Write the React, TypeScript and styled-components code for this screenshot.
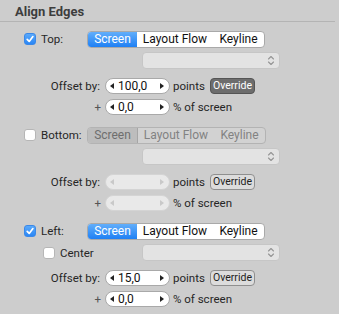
import React from 'react';
import styled, { createGlobalStyle, css } from 'styled-components';

const GlobalStyle = createGlobalStyle`
  html, body {
    margin: 0;
    padding: 0;
    background: #cdcdcd;
  }
  body {
    font-family: Roboto, 'Liberation Sans', Arial, sans-serif;
    font-size: 11.5px;
    color: #262626;
  }
`;

type SectionData = {
  label: string;
  enabled: boolean;
  centerOption?: boolean;
  offset?: string;
  percent?: string;
  overrideOn?: boolean;
};

const sections: SectionData[] = [
  { label: 'Top:', enabled: true, offset: '100,0', percent: '0,0', overrideOn: true },
  { label: 'Bottom:', enabled: false },
  { label: 'Left:', enabled: true, centerOption: true, offset: '15,0', percent: '0,0' },
];

const Check: React.FC<{ on: boolean }> = ({ on }) => (
  <SCheck $on={on}>
    {on && (
      <svg width="10" height="10" viewBox="0 0 10 10">
        <path d="M2.2 5.3 L4.2 7.4 L7.9 2.6" fill="none" stroke="#fff" strokeWidth="1.7" strokeLinecap="round" strokeLinejoin="round" />
      </svg>
    )}
  </SCheck>
);

const Segmented: React.FC<{ disabled?: boolean }> = ({ disabled }) => (
  <SSegmented $disabled={disabled}>
    <SSegment $selected $disabled={disabled} $w={49}>Screen</SSegment>
    <SSegment $disabled={disabled} $w={76}>Layout Flow</SSegment>
    <SSegment $disabled={disabled} $w={51}>Keyline</SSegment>
  </SSegmented>
);

const Popup: React.FC = () => (
  <SPopup>
    <svg width="8" height="11" viewBox="0 0 8 11">
      <path d="M1.5 4 L4 1.5 L6.5 4 M1.5 7 L4 9.5 L6.5 7" fill="none" stroke="#959595" strokeWidth="1.1" strokeLinecap="round" strokeLinejoin="round" />
    </svg>
  </SPopup>
);

const Stepper: React.FC<{ value?: string; disabled: boolean }> = ({ value, disabled }) => (
  <SStepper $disabled={disabled}>
    <SArrow $disabled={disabled}>
      <svg width="4" height="6" viewBox="0 0 4 6"><path d="M4 0 L0 3 L4 6 Z" /></svg>
    </SArrow>
    <SValue>{value}</SValue>
    <SArrow $disabled={disabled}>
      <svg width="4" height="6" viewBox="0 0 4 6"><path d="M0 0 L4 3 L0 6 Z" /></svg>
    </SArrow>
  </SStepper>
);

const Section: React.FC<{ data: SectionData; first?: boolean }> = ({ data, first }) => (
  <SSection $first={first}>
    <SHeaderRow>
      <SLabelCell>
        <Check on={data.enabled} />
        <SCheckLabel>{data.label}</SCheckLabel>
      </SLabelCell>
      <Segmented disabled={!data.enabled} />
    </SHeaderRow>
    <SPopupRow>
      {data.centerOption && (
        <SCenterOption>
          <Check on={false} />
          <SCheckLabel>Center</SCheckLabel>
        </SCenterOption>
      )}
      <Popup />
    </SPopupRow>
    <SFieldRow $gap={8}>
      <SFieldLabel>Offset by:</SFieldLabel>
      <Stepper value={data.offset} disabled={!data.enabled} />
      <SUnit $w={33}>points</SUnit>
      <SOverride $on={data.overrideOn}>Override</SOverride>
    </SFieldRow>
    <SFieldRow $gap={4}>
      <SFieldLabel $plus>+</SFieldLabel>
      <Stepper value={data.percent} disabled={!data.enabled} />
      <SUnit>% of screen</SUnit>
    </SFieldRow>
  </SSection>
);

export default function App() {
  return (
    <>
      <GlobalStyle />
      <SPanel>
        <STitle>Align Edges</STitle>
        <SDivider />
        {sections.map((s, i) => (
          <Section key={s.label} data={s} first={i === 0} />
        ))}
      </SPanel>
    </>
  );
}

const SPanel = styled.div`
  width: 339px;
  height: 314px;
  background: #cdcdcd;
`;

const STitle = styled.div`
  height: 21px;
  box-sizing: border-box;
  padding: 3px 0 0 15px;
  line-height: 17px;
  font-size: 13px;
  font-weight: bold;
  color: #3d3d3d;
`;

const SDivider = styled.div`
  height: 1px;
  margin-right: 4px;
  background: #b4b4b4;
`;

const SSection = styled.section<{ $first?: boolean }>`
  margin-top: ${(p) => (p.$first ? 8 : 11)}px;
`;

const SHeaderRow = styled.div`
  display: flex;
  align-items: center;
  height: 18px;
  padding-left: 24px;
`;

const SLabelCell = styled.div`
  display: flex;
  align-items: center;
  width: 63px;
`;

const SCheck = styled.span<{ $on: boolean }>`
  box-sizing: border-box;
  width: 12px;
  height: 12px;
  border-radius: 3px;
  display: inline-flex;
  align-items: center;
  justify-content: center;
  flex: none;
  ${(p) =>
    p.$on
      ? css`
          background: linear-gradient(#5aa9fb, #2a86f5);
          border: 1px solid #3a88e8;
        `
      : css`
          background: #fff;
          border: 1px solid #b6b6b6;
        `}
`;

const SCheckLabel = styled.span`
  margin-left: 5px;
  color: #262626;
`;

const SSegmented = styled.div<{ $disabled?: boolean }>`
  display: flex;
  height: 17px;
  box-sizing: border-box;
  border: 1px solid ${(p) => (p.$disabled ? '#b3b3b3' : '#a9a9a9')};
  border-radius: 4px;
  background: ${(p) => (p.$disabled ? '#d2d2d2' : '#fff')};
  overflow: hidden;
`;

const SSegment = styled.span<{ $selected?: boolean; $disabled?: boolean; $w: number }>`
  width: ${(p) => p.$w}px;
  display: flex;
  align-items: center;
  justify-content: center;
  font-size: 12px;
  color: ${(p) => (p.$disabled ? '#828282' : '#111')};
  ${(p) =>
    p.$selected &&
    (p.$disabled
      ? css`
          background: #bdbdbd;
          border-right: 1px solid #a6a6a6;
          color: #6e6e6e;
        `
      : css`
          background: linear-gradient(#62aefb, #1f80f4);
          color: #fff;
        `)}
`;

const SPopupRow = styled.div`
  display: flex;
  align-items: center;
  height: 17px;
  margin-top: 4px;
  padding-left: 43px;
`;

const SCenterOption = styled.div`
  display: flex;
  align-items: center;
`;

const SPopup = styled.div`
  margin-left: auto;
  margin-right: 59px;
  width: 138px;
  height: 17px;
  box-sizing: border-box;
  border: 1px solid #c6c6c6;
  border-radius: 4px;
  background: #e3e3e3;
  display: flex;
  align-items: center;
  justify-content: flex-end;
  padding-right: 4px;
`;

const SFieldRow = styled.div<{ $gap: number }>`
  display: flex;
  align-items: center;
  height: 17px;
  margin-top: ${(p) => p.$gap}px;
`;

const SFieldLabel = styled.span<{ $plus?: boolean }>`
  width: ${(p) => (p.$plus ? 101 : 100)}px;
  text-align: right;
  margin-right: ${(p) => (p.$plus ? 4 : 5)}px;
  color: ${(p) => (p.$plus ? '#555' : '#262626')};
`;

const SStepper = styled.div<{ $disabled: boolean }>`
  width: 65px;
  height: 16px;
  box-sizing: border-box;
  border: 1px solid ${(p) => (p.$disabled ? '#d4d4d4' : '#a9a9a9')};
  border-radius: 8px;
  background: ${(p) => (p.$disabled ? '#e9e9e9' : '#fff')};
  display: flex;
  align-items: center;
  padding: 0 5px 0 4px;
`;

const SArrow = styled.span<{ $disabled: boolean }>`
  display: flex;
  fill: ${(p) => (p.$disabled ? '#c9c9c9' : '#222')};
`;

const SValue = styled.span`
  flex: 1;
  padding-left: 4px;
  font-size: 12px;
  color: #111;
`;

const SUnit = styled.span<{ $w?: number }>`
  margin-left: 3px;
  ${(p) => p.$w && `width: ${p.$w}px;`}
  color: #262626;
`;

const SOverride = styled.span<{ $on?: boolean }>`
  margin-left: 4px;
  width: 45px;
  height: 16px;
  box-sizing: border-box;
  border-radius: 4px;
  display: flex;
  align-items: center;
  justify-content: center;
  font-size: 10.5px;
  ${(p) =>
    p.$on
      ? css`
          background: #6d6d6d;
          border: 1px solid #555;
          color: #fff;
        `
      : css`
          background: #dcdcdc;
          border: 1px solid #8f8f8f;
          color: #222;
        `}
`;
